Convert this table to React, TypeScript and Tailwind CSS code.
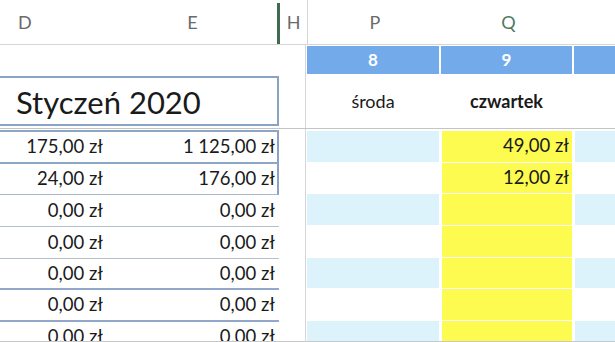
const font = "font-['Lato',sans-serif]";

const rows = [
  { d: "175,00 zł", e: "1 125,00 zł", q: "49,00 zł", line: "border-[#8ea6c6] border-b-2" },
  { d: "24,00 zł", e: "176,00 zł", q: "12,00 zł", line: "border-[#a9b8cc] border-b" },
  { d: "0,00 zł", e: "0,00 zł", q: "", line: "border-[#b4bfcc] border-b" },
  { d: "0,00 zł", e: "0,00 zł", q: "", line: "border-[#b8c0ca] border-b" },
  { d: "0,00 zł", e: "0,00 zł", q: "", line: "border-[#91a8c8] border-b-2" },
  { d: "0,00 zł", e: "0,00 zł", q: "", line: "border-[#91a8c8] border-b-2" },
  { d: "0,00 zł", e: "0,00 zł", q: "", line: "border-[#91a8c8] border-b-2" },
];

export default function App() {
  return (
    <div className={`${font} h-[342px] w-[615px] overflow-hidden border-b border-[#c8c8c8] bg-white text-[#1a1a1a]`}>
      {/* column letters */}
      <div className="flex h-[45px] border-b border-[#d6d6d6] text-[18px] text-[#6a6a6a]">
        <div className="flex w-[108px] items-center pl-[18px]">D</div>
        <div className="flex w-[169px] items-center justify-center">E</div>
        <div className="mt-[3px] w-[3px] bg-[#3f6b50]" />
        <div className="flex w-[28px] items-center justify-center border-r border-[#d6d6d6]">H</div>
        <div className="flex w-[134px] items-center justify-center">P</div>
        <div className="flex w-[133px] items-center justify-center text-[#4f7a62]">Q</div>
        <div className="flex-1" />
      </div>

      {/* day numbers */}
      <div className="flex h-[30px]">
        <div className="w-[278px]" />
        <div className="w-[28px] border-r border-[#d6d6d6]" />
        <div className="w-[134px] p-px">
          <div className="flex h-full items-center justify-center bg-[#73aaea] text-[17px] font-bold text-white">8</div>
        </div>
        <div className="w-[133px] p-px">
          <div className="flex h-full items-center justify-center bg-[#73aaea] text-[17px] font-bold text-white">9</div>
        </div>
        <div className="flex-1 py-px pl-px">
          <div className="h-full bg-[#73aaea]" />
        </div>
      </div>

      {/* title row */}
      <div className="flex h-[54px] border-b border-[#c4c4c4]">
        <div className="w-[279px] pt-px pb-[2px]">
          <div className="flex h-full items-center border-2 border-l-0 border-[#8aa2c4] pt-[2px] pl-[16px] text-[31px]">
            Styczeń 2020
          </div>
        </div>
        <div className="w-[27px] border-r border-[#d6d6d6]" />
        <div className="flex w-[134px] items-center justify-center text-[18px]">środa</div>
        <div className="flex w-[133px] items-center justify-center text-[18px] font-bold">czwartek</div>
        <div className="flex-1" />
      </div>

      {/* data rows */}
      <div className="flex">
        <div className="w-[279px] pt-px">
          <div className="border-t-2 border-[#8ea6c6]">
            {rows.map((r, i) => (
              <div
                key={i}
                className={`flex h-[31.7px] items-center text-[18.5px] ${r.line} ${i < 2 ? "border-r-2 border-r-[#8aa2c4]" : "pr-[2px]"}`}
              >
                <div className="w-[108px] pr-[5px] text-right">{r.d}</div>
                <div className="flex-1 pr-[2px] text-right">{r.e}</div>
              </div>
            ))}
          </div>
        </div>
        <div className="w-[27px] border-r border-[#d6d6d6]" />
        <div className="flex-1 pt-[2px]">
          {rows.map((r, i) => (
            <div key={i} className="flex h-[31.7px] pb-px">
              <div className={`ml-px w-[132px] ${i % 2 === 0 ? "bg-[#ddf3fc]" : ""}`} />
              <div className="ml-[3px] flex w-[130px] items-center justify-end bg-[#fdfb50] pr-[3px] text-[18.5px]">
                {r.q}
              </div>
              <div className={`ml-[3px] flex-1 ${i % 2 === 0 ? "bg-[#ddf3fc]" : ""}`} />
            </div>
          ))}
        </div>
      </div>
    </div>
  );
}
